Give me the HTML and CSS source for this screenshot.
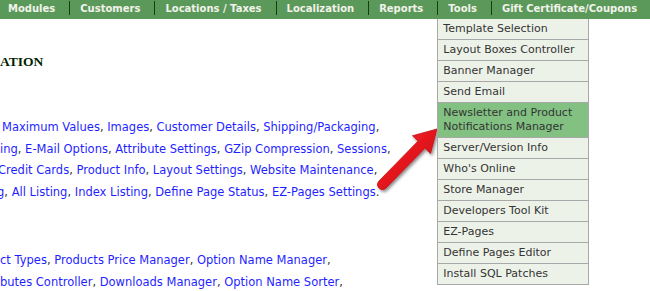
FILE: index.html
```html
<!DOCTYPE html>
<html lang="en">
<head>
    <meta charset="UTF-8">
    <meta name="viewport" content="width=device-width, initial-scale=1.0">
    <title>Tools menu</title>
    <link rel="stylesheet" href="styles.css">
</head>
<body>
    <ul class="nav">
        <li class="first">Modules</li>
        <li>Customers</li>
        <li>Locations / Taxes</li>
        <li>Localization</li>
        <li>Reports</li>
        <li class="open">Tools
            <ul class="dropdown">
                <li>Template Selection</li>
                <li>Layout Boxes Controller</li>
                <li>Banner Manager</li>
                <li>Send Email</li>
                <li class="hover">Newsletter and Product Notifications Manager</li>
                <li>Server/Version Info</li>
                <li>Who's Online</li>
                <li>Store Manager</li>
                <li>Developers Tool Kit</li>
                <li>EZ-Pages</li>
                <li>Define Pages Editor</li>
                <li>Install SQL Patches</li>
            </ul>
        </li>
        <li>Gift Certificate/Coupons</li>
    </ul>

    <div class="content">
        <h1 class="heading">ATION</h1>

        <div class="group first-group">
            <div class="line l1"><a href="#">Maximum Values</a>, <a href="#">Images</a>, <a href="#">Customer Details</a>, <a href="#">Shipping/Packaging</a>,</div>
            <div class="line l2"><a href="#">ing</a>, <a href="#">E-Mail Options</a>, <a href="#">Attribute Settings</a>, <a href="#">GZip Compression</a>, <a href="#">Sessions</a>,</div>
            <div class="line l3"><a href="#">Credit Cards</a>, <a href="#">Product Info</a>, <a href="#">Layout Settings</a>, <a href="#">Website Maintenance</a>,</div>
            <div class="line l4"><a href="#">g</a>, <a href="#">All Listing</a>, <a href="#">Index Listing</a>, <a href="#">Define Page Status</a>, <a href="#">EZ-Pages Settings</a>.</div>
        </div>

        <div class="group">
            <div class="line"><a href="#">ct Types</a>, <a href="#">Products Price Manager</a>, <a href="#">Option Name Manager</a>,</div>
            <div class="line"><a href="#">butes Controller</a>, <a href="#">Downloads Manager</a>, <a href="#">Option Name Sorter</a>,</div>
        </div>
    </div>

    <!-- pointer arrow -->
    <svg class="arrow" width="80" height="85" viewBox="0 0 80 85">
        <defs>
            <linearGradient id="red" x1="0" y1="0" x2="1" y2="1">
                <stop offset="0" stop-color="#ff3b3b"/>
                <stop offset="0.5" stop-color="#e3161c"/>
                <stop offset="1" stop-color="#b80c10"/>
            </linearGradient>
            <filter id="shadow" x="-30%" y="-30%" width="160%" height="160%">
                <feDropShadow dx="1.5" dy="2" stdDeviation="1.5" flood-color="#000" flood-opacity="0.45"/>
            </filter>
        </defs>
        <path d="M67,9 L60.5,33.5 L55.1,28.1 L15.5,68.5 A5,5 0 0,1 8.5,61.5 L48.1,21.1 L42.5,15.8 Z"
              fill="url(#red)" stroke="#c41015" stroke-width="0.8" filter="url(#shadow)"/>
    </svg>
</body>
</html>
```

FILE: styles.css
```css
body {
    margin: 0;
    background-color: #fff;
    font-family: Verdana, "DejaVu Sans", sans-serif;
    position: relative;
    overflow: hidden;
    height: 291px;
}

/* top menu bar */
.nav {
    list-style: none;
    margin: 0;
    padding: 0;
    height: 19px;
    display: flex;
    white-space: nowrap;
    background-color: #5b995b;
}
.nav > li {
    position: relative;
    margin-top: 1px;
    height: 14px;
    line-height: 15px;
    padding: 0 14px 0 10px;
    border-left: 1px solid #0f400f;
    color: #f2f2ea;
    font-size: 10px;
    font-weight: bold;
}
.nav > li.first {
    padding-left: 8px;
    border-left: none;
}

/* tools dropdown */
.dropdown {
    list-style: none;
    position: absolute;
    top: 18px;
    left: -1px;
    width: 152px;
    box-sizing: border-box;
    margin: 0;
    padding: 0;
    background-color: #edf2e8;
    border: 1px solid #a8a8a8;
    border-top: none;
    z-index: 5;
}
.dropdown li {
    padding: 3px 5px;
    line-height: 14px;
    color: #343434;
    font-size: 11px;
    font-weight: normal;
    white-space: normal;
    border-bottom: 1px solid #a8a8a8;
}
.dropdown li:last-child {
    border-bottom: none;
}
.dropdown li.hover {
    background-color: #82c182;
}

/* page content */
.content {
    padding-top: 33px;
    font-size: 11.5px;
    color: #333;
}
.heading {
    margin: 0;
    height: 20px;
    line-height: 20px;
    font-family: Georgia, "Liberation Serif", serif;
    font-size: 13.5px;
    font-weight: bold;
    color: #011f01;
}
.group {
    margin-top: 47px;
}
.first-group {
    margin-top: 45px;
}
.line {
    line-height: 21.5px;
    white-space: nowrap;
}
.line a {
    color: #1f1fff;
    text-decoration: none;
}
.l1 {
    padding-left: 2px;
}
.l3 {
    text-indent: -2px;
}
.l4 {
    text-indent: -3px;
}

.arrow {
    position: absolute;
    left: 370px;
    top: 120px;
}
```
